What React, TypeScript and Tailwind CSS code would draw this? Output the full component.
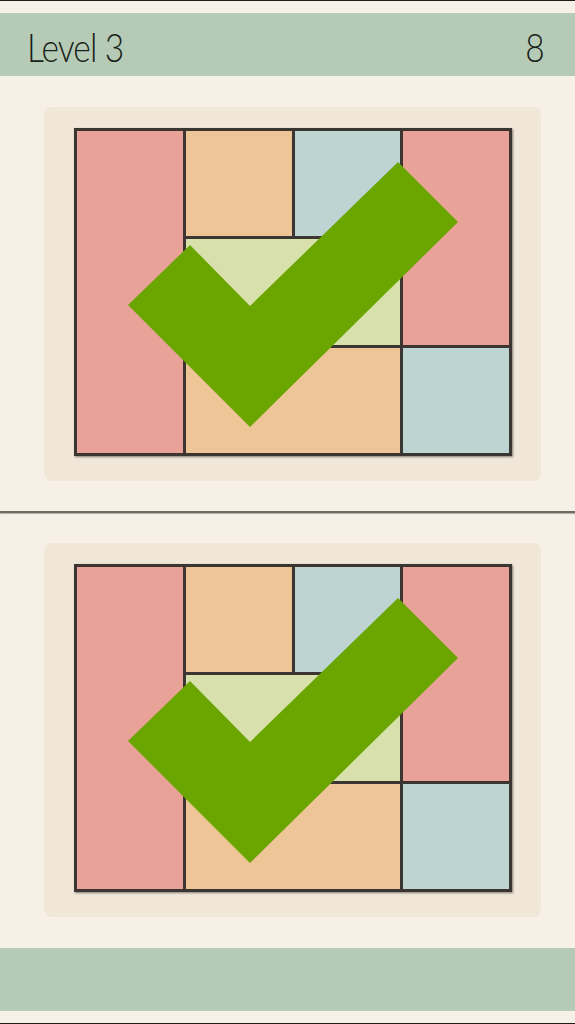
const pieces = [
  { c: "col-start-1 row-start-1 row-span-3", bg: "bg-[#e8a297]" },
  { c: "col-start-2 row-start-1", bg: "bg-[#edc597]" },
  { c: "col-start-3 row-start-1", bg: "bg-[#bed4d3]" },
  { c: "col-start-4 row-start-1 row-span-2", bg: "bg-[#e8a297]" },
  { c: "col-start-2 col-span-2 row-start-2", bg: "bg-[#d8e0ac]" },
  { c: "col-start-2 col-span-2 row-start-3", bg: "bg-[#edc597]" },
  { c: "col-start-4 row-start-3", bg: "bg-[#bed4d3]" },
];

function Board() {
  return (
    <div className="rounded-[8px] bg-[#f0e7d9] mx-[44px] w-[497px] h-[374px] shrink-0 pt-[21px] pl-[30px]">
      <div className="relative w-[438px] h-[328px]">
        <div className="grid grid-cols-4 grid-rows-3 gap-[3px] p-[3px] w-full h-full bg-[#3c3632] shadow-[1px_1px_2px_rgba(60,54,50,0.6)]">
          {pieces.map((p, i) => (
            <div key={i} className={`${p.c} ${p.bg}`} />
          ))}
        </div>
        <svg className="absolute left-0 top-0" width="438" height="328" viewBox="0 0 438 328">
          <polygon points="54,177 116,117 176,178 324,34 384,94 176,299" fill="#6aa500" />
        </svg>
      </div>
    </div>
  );
}

export default function App() {
  return (
    <div className="w-[575px] h-[1024px] flex flex-col bg-[#f7f0e6] overflow-hidden">
      <div className="h-[1px] bg-[#1e1c18] shrink-0" />
      <div className="h-[12px] shrink-0" />
      <div
        className="h-[63px] shrink-0 bg-[#b5cbb6] flex items-center justify-between pl-[27px] pr-[30px] text-[#1a1f1a] text-[39px]"
        style={{ fontFamily: "Lato, 'Noto Sans', sans-serif", fontWeight: 300 }}
      >
        <span className="leading-none pt-[6px] tracking-[-1px] scale-x-[0.86] origin-left">Level 3</span>
        <span className="leading-none pt-[6px] scale-x-[0.86] origin-right">8</span>
      </div>
      <div className="h-[31px] shrink-0" />
      <Board />
      <div className="h-[30px] shrink-0" />
      <div className="h-[2px] shrink-0 bg-[#6e6a64] shadow-[0_1px_1px_rgba(110,106,100,0.5)]" />
      <div className="h-[30px] shrink-0" />
      <Board />
      <div className="h-[31px] shrink-0" />
      <div className="h-[63px] shrink-0 bg-[#b5cbb6]" />
      <div className="h-[12px] shrink-0" />
      <div className="h-[2px] bg-[#1e1c18] shrink-0" />
    </div>
  );
}
